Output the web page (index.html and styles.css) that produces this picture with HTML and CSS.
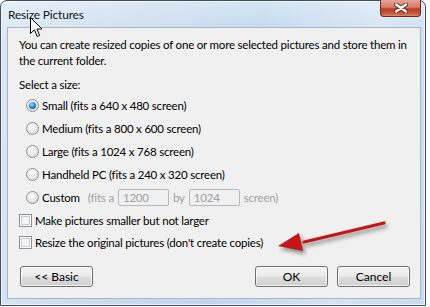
FILE: index.html
```
<!DOCTYPE html>
<html lang="en">
<head>
    <meta charset="UTF-8">
    <title>Resize Pictures</title>
    <link rel="stylesheet" href="styles.css">
</head>
<body>
    <div class="window">
        <div class="titlebar">
            <span class="title">Resize Pictures</span>
            <div class="close">
                <svg width="14" height="10" viewBox="0 0 14 10">
                    <path d="M2 1.5 L12 8.5 M12 1.5 L2 8.5" stroke="#5a2a22" stroke-width="4" stroke-linecap="round"/>
                    <path d="M2 1.5 L12 8.5 M12 1.5 L2 8.5" stroke="#fff" stroke-width="2.2" stroke-linecap="round"/>
                </svg>
            </div>
        </div>

        <div class="client">
            <p class="intro">You can create resized copies of one or more selected pictures and store them in<br>the current folder.</p>

            <div class="caption">Select a size:</div>

            <div class="options">
                <label class="opt"><span class="radio checked"></span>Small (fits a 640 x 480 screen)</label>
                <label class="opt"><span class="radio"></span>Medium (fits a 800 x 600 screen)</label>
                <label class="opt"><span class="radio"></span>Large (fits a 1024 x 768 screen)</label>
                <label class="opt"><span class="radio"></span>Handheld PC (fits a 240 x 320 screen)</label>
                <label class="opt"><span class="radio"></span><span class="custom-name">Custom</span>
                    <span class="dim">(fits a</span>
                    <span class="field">1200</span>
                    <span class="dim">by</span>
                    <span class="field">1024</span>
                    <span class="dim">screen)</span>
                </label>
            </div>

            <div class="checks">
                <label class="chk"><span class="box"></span>Make pictures smaller but not larger</label>
                <label class="chk"><span class="box"></span>Resize the original pictures (don't create copies)</label>
            </div>

            <div class="buttons">
                <button class="btn">&lt;&lt; Basic</button>
                <span class="spacer"></span>
                <button class="btn">OK</button>
                <button class="btn">Cancel</button>
            </div>
        </div>
    </div>

    <!-- red annotation arrow -->
    <svg class="arrow" width="130" height="50" viewBox="0 0 130 50">
        <path d="M108 3 L28 22" stroke="#c41616" stroke-width="3.2" stroke-linecap="round"/>
        <path d="M2 26 L23 13 L27 31 Z" fill="#c41616"/>
    </svg>

    <!-- mouse pointer -->
    <svg class="cursor" width="13" height="21" viewBox="0 0 13 21">
        <path d="M0.5 0.5 L0.5 16.5 L4.5 12.8 L7.2 19.5 L9.6 18.5 L7 12 L12 12 Z" fill="#fff" stroke="#000" stroke-width="1"/>
    </svg>
</body>
</html>
```

FILE: styles.css
```
body {
    margin: 0;
    width: 430px;
    height: 307px;
    background: #fff;
    font-family: Lato, "Noto Sans", sans-serif;
    font-size: 11.5px;
    letter-spacing: -0.2px;
    color: #000;
    position: relative;
    overflow: hidden;
}
.window {
    width: 426px;
    height: 306px;
    box-sizing: border-box;
    border: 1px solid #3f4f60;
    border-radius: 7px 7px 0 0;
    padding: 0 4px 6px 6px;
    display: flex;
    flex-direction: column;
    background: linear-gradient(180deg, rgba(255,255,255,0.35), rgba(255,255,255,0) 40px),
                linear-gradient(100deg, #dbe8f4 0%, #c9dcee 30%, #bed6ee 55%, #d3e3f2 80%, #c8dbee 100%);
    box-shadow: inset 0 0 0 1px rgba(255,255,255,0.6);
}
.titlebar {
    height: 26px;
    display: flex;
    justify-content: space-between;
    align-items: flex-start;
}
.title {
    padding: 6px 0 0 1px;
    line-height: 16px;
    font-size: 12px;
    color: #101820;
}
.close {
    width: 41px;
    height: 17px;
    margin-top: -1px;
    box-sizing: border-box;
    border: 1px solid #6b2c22;
    border-top: none;
    border-radius: 0 0 4px 4px;
    background: linear-gradient(180deg, #e5a699 0%, #d47b6a 45%, #b93c24 55%, #c65a3f 85%, #d98a6d 100%);
    display: flex;
    align-items: center;
    justify-content: center;
}
.client {
    height: 273px;
    box-sizing: border-box;
    border: 1px solid #a8b6c4;
    background: #f0f0f0;
    padding: 9px 10px 0 11px;
    display: flex;
    flex-direction: column;
}
.intro {
    margin: 0;
    line-height: 16px;
    white-space: nowrap;
}
.caption {
    margin-top: 8px;
    line-height: 16px;
}
.options {
    margin-top: 1px;
    padding-left: 7px;
}
.opt, .chk {
    display: flex;
    align-items: center;
    white-space: nowrap;
}
.opt {
    height: 23px;
}
.radio {
    width: 13px;
    height: 13px;
    box-sizing: border-box;
    border-radius: 50%;
    border: 1px solid #8c8f93;
    background: radial-gradient(circle at 40% 35%, #ffffff 0%, #e6e6e6 55%, #cfcfcf 100%);
    margin-right: 3px;
    display: flex;
    align-items: center;
    justify-content: center;
}
.radio.checked::after {
    content: "";
    width: 7px;
    height: 7px;
    border-radius: 50%;
    background: radial-gradient(circle at 40% 35%, #a6e4ff 0%, #2a8bd6 45%, #0a3f86 100%);
}
.custom-name {
    margin-right: 8px;
}
.dim {
    color: #a0a0a0;
}
.field {
    width: 51px;
    height: 17px;
    box-sizing: border-box;
    border: 1px solid #b6b9bd;
    border-radius: 2px;
    background: #f0f0f0;
    color: #a0a0a0;
    padding-left: 4px;
    line-height: 15px;
    margin: 0 4px;
}
.checks {
    margin-top: 1px;
}
.chk {
    height: 22px;
}
.box {
    width: 13px;
    height: 13px;
    box-sizing: border-box;
    border: 1px solid #8c8f93;
    background: #f4f4f4;
    box-shadow: inset 0 0 0 1px #fff, inset 0 0 0 2px #c9cbcd;
    margin-right: 3px;
}
.buttons {
    margin-top: 12px;
    display: flex;
    gap: 9px;
    padding-left: 1px;
}
.spacer {
    flex: 1;
}
.btn {
    width: 73px;
    height: 21px;
    border: 1px solid #707070;
    border-radius: 3px;
    background: linear-gradient(180deg, #f2f2f2 0%, #ebebeb 48%, #dddddd 52%, #cfcfcf 100%);
    box-shadow: inset 0 0 0 1px rgba(255,255,255,0.7);
    font-family: inherit;
    font-size: 12px;
    letter-spacing: 0;
    color: #000;
    padding: 0;
}
.arrow {
    position: absolute;
    left: 276px;
    top: 220px;
    filter: drop-shadow(2px 3px 2px rgba(0,0,0,0.45));
}
.cursor {
    position: absolute;
    left: 30px;
    top: 17px;
}
```
